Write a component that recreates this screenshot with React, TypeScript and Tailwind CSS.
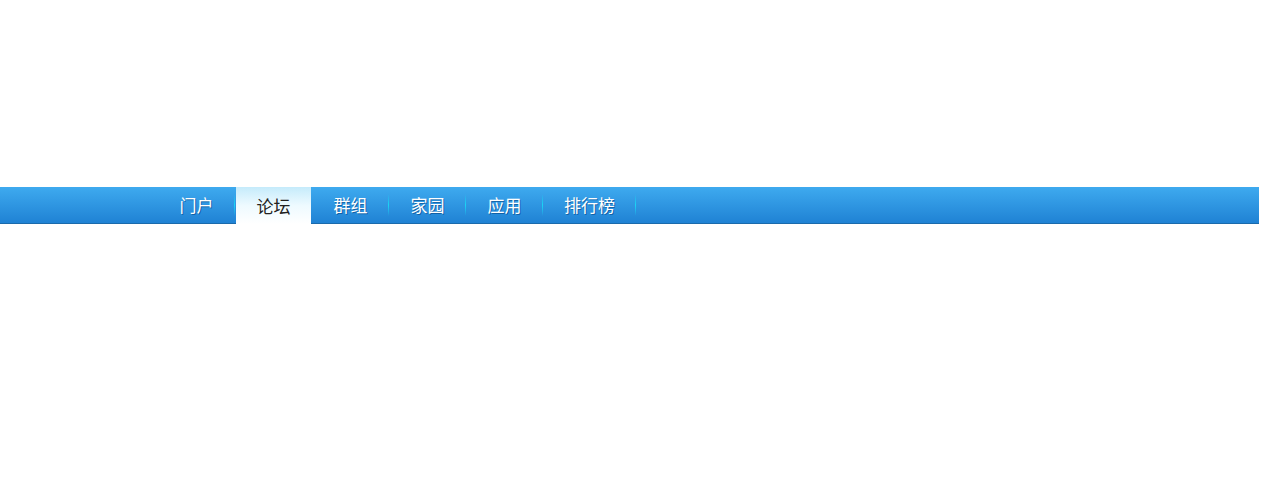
import React from 'react'

const navItems = [
    { id: 'portal', label: '门户' },
    { id: 'forum', label: '论坛', active: true },
    { id: 'group', label: '群组' },
    { id: 'home', label: '家园' },
    { id: 'app', label: '应用' },
    { id: 'rank', label: '排行榜' },
]

const App: React.FC = () => {
    return (
        <div className="w-[1262px] h-[480px] bg-white pt-[187px]">
            {/* Nav bar */}
            <div className="w-[1259px] h-[37px] bg-gradient-to-b from-[#3eaaef] to-[#1f82d4] border-b border-[#1a6aab]">
                <ul className="flex h-[37px] pl-[159px] font-['Noto_Sans_CJK_SC',sans-serif] text-[17px]">
                    {navItems.map((item) => (
                        <li key={item.id} className="flex h-full">
                            <a
                                className={
                                    item.active
                                        ? 'flex items-center justify-center h-[37px] px-[20px] min-w-[75px] bg-gradient-to-b from-[#c5ebfb] via-[#eefaff] to-white text-[#222]'
                                        : 'flex items-center justify-center h-[36px] px-[20px] min-w-[75px] text-white [text-shadow:1px_1px_0_rgba(0,60,120,0.55)]'
                                }
                            >
                                {item.label}
                            </a>
                            <span className="flex w-[2px] h-[36px] items-center">
                                {!item.active && (
                                    <span className="block w-px h-[22px] bg-gradient-to-b from-transparent via-[#19d6f5] to-transparent" />
                                )}
                            </span>
                        </li>
                    ))}
                </ul>
            </div>
        </div>
    )
}

export default App
